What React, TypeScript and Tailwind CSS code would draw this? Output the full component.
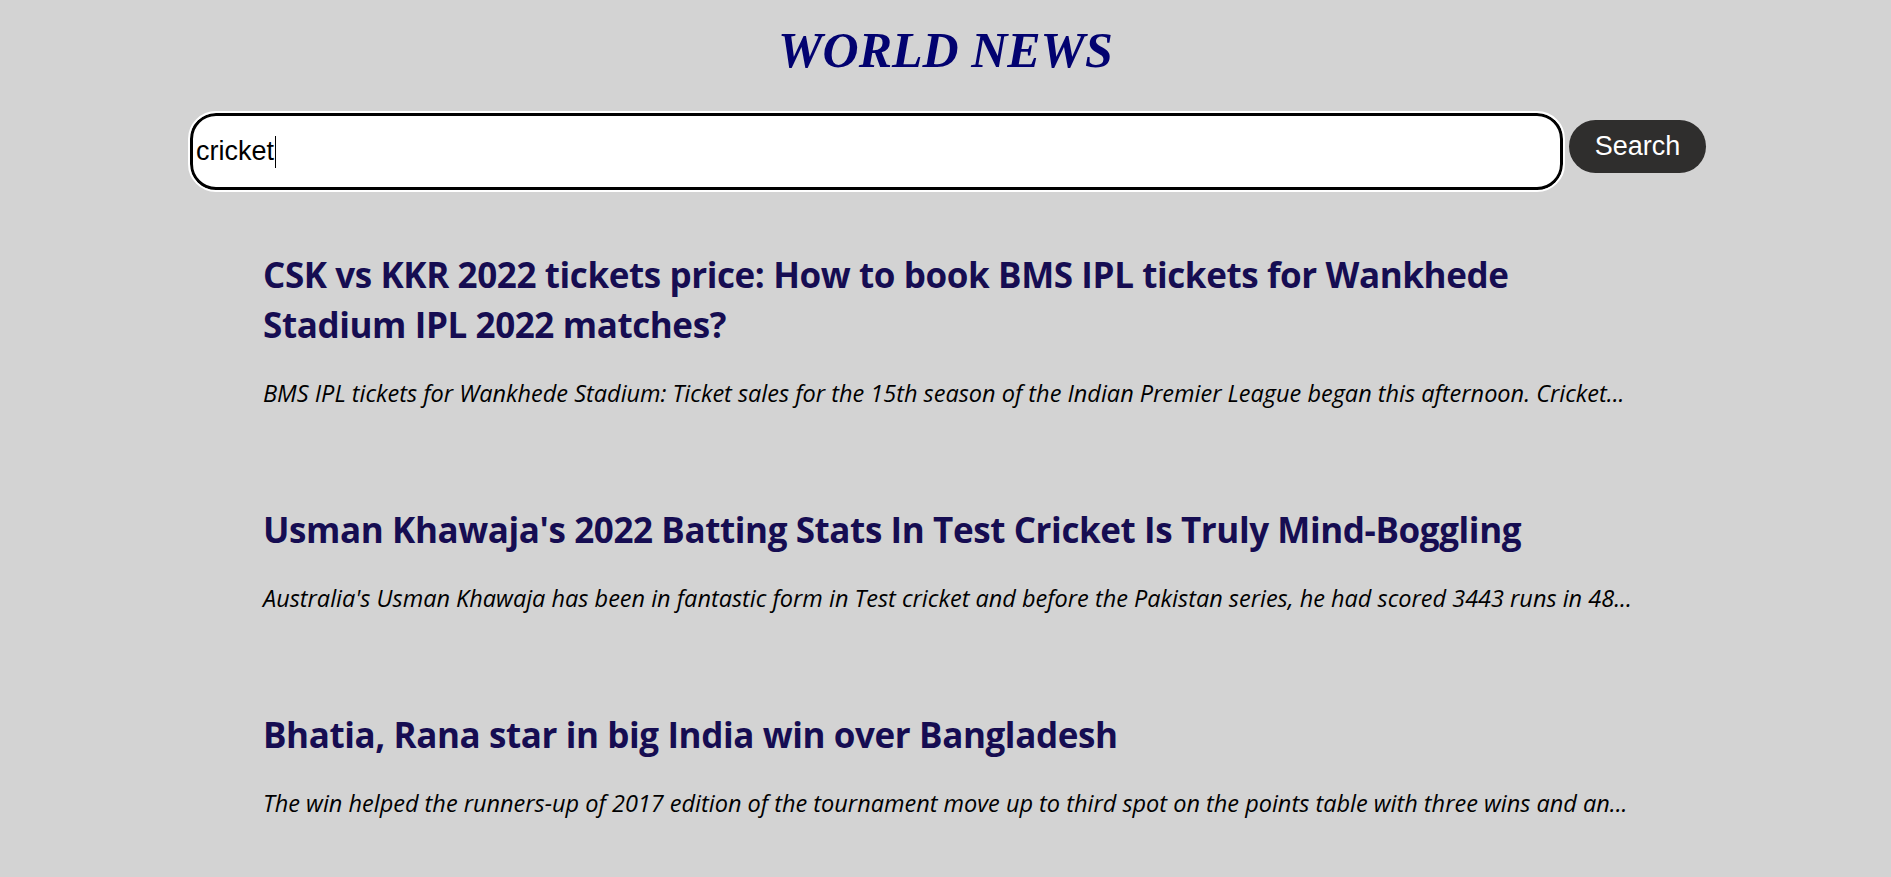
import React from "react";

const articles = [
  {
    title:
      "CSK vs KKR 2022 tickets price: How to book BMS IPL tickets for Wankhede Stadium IPL 2022 matches?",
    desc: "BMS IPL tickets for Wankhede Stadium: Ticket sales for the 15th season of the Indian Premier League began this afternoon. Cricket...",
  },
  {
    title:
      "Usman Khawaja's 2022 Batting Stats In Test Cricket Is Truly Mind-Boggling",
    desc: "Australia's Usman Khawaja has been in fantastic form in Test cricket and before the Pakistan series, he had scored 3443 runs in 48...",
  },
  {
    title: "Bhatia, Rana star in big India win over Bangladesh",
    desc: "The win helped the runners-up of 2017 edition of the tournament move up to third spot on the points table with three wins and an...",
  },
];

export default function App() {
  return (
    <div className="min-h-screen bg-[#d3d3d3] pb-16">
      <h1 className="pt-[20px] text-center font-['Liberation_Serif',serif] text-[50px] font-bold italic leading-[60px] text-[#020270]">
        WORLD NEWS
      </h1>
      <div className="mt-[33px] flex items-start justify-center gap-[6px] pl-[5px]">
        <div className="flex h-[77px] w-[1373px] items-center rounded-[26px] border-[3px] border-black bg-white pl-[3px] font-['Liberation_Sans',Arial,sans-serif] text-[27px] text-black outline-2 outline-white">
          <span>cricket</span>
          <span className="ml-px inline-block h-[32px] w-px bg-black" />
        </div>
        <button className="mt-[7px] h-[53px] w-[137px] rounded-full bg-[#2f2e2d] font-['Liberation_Sans',Arial,sans-serif] text-[27px] text-white">
          Search
        </button>
      </div>
      <div className="mx-auto mt-[60px] flex w-[1365px] flex-col gap-[96px] font-['Open_Sans',sans-serif]">
        {articles.map((a) => (
          <div key={a.title}>
            <h2 className="text-[35px] font-bold leading-[50px] tracking-[-0.4px] text-[#160d52]">
              {a.title}
            </h2>
            <p className="mt-[27px] whitespace-nowrap text-[23.5px] italic leading-[32px] text-black">
              {a.desc}
            </p>
          </div>
        ))}
      </div>
    </div>
  );
}
